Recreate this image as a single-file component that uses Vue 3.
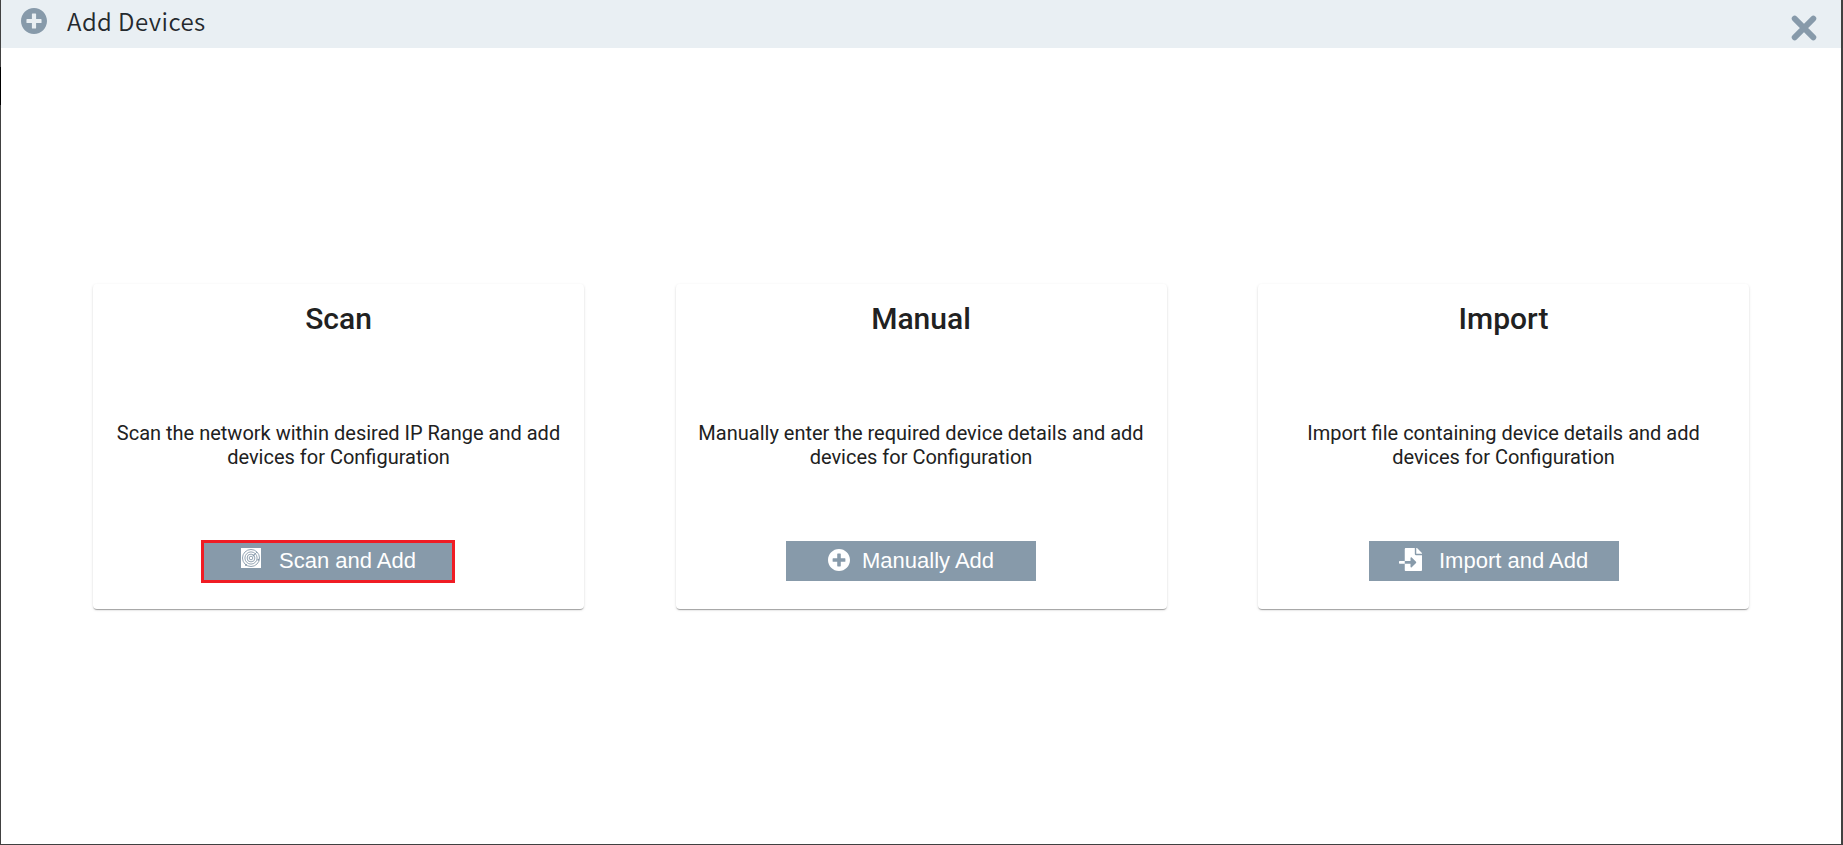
<script setup>
const cards = [
  {
    id: 'scan',
    title: 'Scan',
    lines: ['Scan the network within desired IP Range and add', 'devices for Configuration'],
    action: 'Scan and Add',
  },
  {
    id: 'manual',
    title: 'Manual',
    lines: ['Manually enter the required device details and add', 'devices for Configuration'],
    action: 'Manually Add',
  },
  {
    id: 'import',
    title: 'Import',
    lines: ['Import file containing device details and add', 'devices for Configuration'],
    action: 'Import and Add',
  },
]
const plusPath =
  'M256 8C119 8 8 119 8 256s111 248 248 248 248-111 248-248S393 8 256 8zm144 276c0 6.600-5.400 12-12 12h-92v92c0 6.600-5.400 12-12 12h-56c-6.600 0-12-5.400-12-12v-92h-92c-6.600 0-12-5.400-12-12v-56c0-6.600 5.400-12 12-12h92v-92c0-6.600 5.400-12 12-12h56c6.600 0 12 5.400 12 12v92h92c6.600 0 12 5.400 12 12v56z'
</script>

<template>
  <div class="dialog">
    <header class="bar">
      <svg class="bar-icon" viewBox="8 8 496 496"><path :d="plusPath" /></svg>
      <h1 class="bar-title">Add Devices</h1>
      <button class="close" aria-label="Close">
        <svg viewBox="0 0 24 24"><path d="M4 4 L20 20 M20 4 L4 20" /></svg>
      </button>
    </header>
    <main class="cards">
      <section v-for="card in cards" :key="card.id" class="card">
        <h2 class="card-title">{{ card.title }}</h2>
        <p class="card-text">
          <span v-for="line in card.lines" :key="line">{{ line }}</span>
        </p>
        <button class="action" :class="card.id">
          <svg v-if="card.id === 'scan'" class="icon" viewBox="0 0 20 20">
            <rect width="20" height="20" fill="#fff" />
            <g fill="none" stroke="#879aaa" stroke-width="0.900">
              <circle cx="10" cy="10" r="8.500" />
              <circle cx="10" cy="10" r="6.100" />
              <circle cx="10" cy="10" r="3.900" />
              <circle cx="10" cy="10" r="1.800" />
              <path d="M12.500 7.500L16 4" />
            </g>
            <g fill="#879aaa">
              <circle cx="5" cy="17" r="1" />
              <circle cx="17.300" cy="11.800" r="1" />
              <circle cx="12.400" cy="7.600" r="0.800" />
            </g>
          </svg>
          <svg v-else-if="card.id === 'manual'" class="icon" viewBox="8 8 496 496">
            <path fill="#fff" :d="plusPath" />
          </svg>
          <svg v-else class="icon" viewBox="0 0 512 512">
            <path
              fill="#fff"
              d="M16 288c-8.800 0-16 7.200-16 16v32c0 8.800 7.200 16 16 16h112v-64H16zm489-183L407.100 7c-4.500-4.500-10.600-7-17-7H384v128h128v-6.100c0-6.300-2.500-12.400-7-16.900zM352 136V0H152c-13.300 0-24 10.700-24 24v264h128v-65.200c0-14.300 17.300-21.400 27.400-11.300L379 308c6.600 6.700 6.600 17.400 0 24l-95.700 96.400c-10.100 10.100-27.400 3-27.400-11.300V352H128v136c0 13.300 10.700 24 24 24h336c13.300 0 24-10.700 24-24V160H376c-13.200 0-24-10.800-24-24z"
            />
          </svg>
          <span class="label">{{ card.action }}</span>
        </button>
      </section>
    </main>
  </div>
</template>

<style>
body {
  margin: 0;
  overflow: hidden;
}
</style>

<style scoped>
.dialog {
  box-sizing: border-box;
  height: 845px;
  background:
    linear-gradient(#000, #000) 0 67px / 1px 38px no-repeat border-box,
    linear-gradient(#414141, #414141) 0 0 / 1px 100% no-repeat border-box,
    #fff;
  border: solid #414141;
  border-left-color: transparent;
  border-width: 0 2px 1px 1px;
}
.bar {
  display: flex;
  align-items: flex-start;
  height: 48px;
  background: #e9eff3;
}
.bar-icon {
  width: 26px;
  height: 26px;
  margin: 8px 0 0 20px;
  fill: #879aaa;
}
.bar-title {
  margin: 3px 0 0 20px;
  font: 350 24px/36px 'Noto Sans CJK SC', sans-serif;
  letter-spacing: 0.45px;
  color: #24292e;
  white-space: nowrap;
}
.close {
  margin: 14px 23px 0 auto;
  padding: 0;
  border: 0;
  background: none;
}
.close svg {
  display: block;
  width: 28px;
  height: 28px;
  fill: none;
  stroke: #879aaa;
  stroke-width: 5;
  stroke-linecap: round;
}
.cards {
  display: grid;
  grid-template-columns: repeat(3, 491px);
  justify-content: space-between;
  padding: 236px 92px 0;
}
.card {
  display: flex;
  flex-direction: column;
  align-items: center;
  height: 325px;
  border-radius: 4px;
  box-shadow: 0 2px 1px -1px rgba(0, 0, 0, 0.2), 0 1px 1px rgba(0, 0, 0, 0.14), 0 1px 3px rgba(0, 0, 0, 0.12);
  color: #212121;
}
.card-title {
  margin: 17px 0 0;
  font: 500 30px/36px Roboto, sans-serif;
}
.card-text {
  display: flex;
  flex-direction: column;
  align-items: center;
  margin: 84px 0 0;
  font: 400 20px/24px Roboto, sans-serif;
  white-space: nowrap;
}
.action {
  display: flex;
  align-items: flex-start;
  box-sizing: border-box;
  width: 250px;
  height: 40px;
  margin: 72px 20px 0 0;
  padding: 0;
  border: 0;
  background: #879aaa;
  color: #fff;
  font: 400 22px/25px 'Liberation Sans', Arial, sans-serif;
  white-space: nowrap;
}
.icon {
  flex: none;
}
.label {
  margin-top: 7px;
}
.scan {
  width: 254px;
  height: 43px;
  margin: 71px 21px 0 0;
  border: 3px solid #f01c24;
}
.scan .icon {
  width: 20px;
  height: 20px;
  margin: 5px 18px 0 37px;
}
.scan .label {
  margin-top: 5px;
}
.manual .icon {
  width: 22px;
  height: 22px;
  margin: 8px 12px 0 42px;
}
.import {
  margin-right: 19px;
}
.import .icon {
  width: 23px;
  height: 23px;
  margin: 7px 17px 0 30px;
}
</style>
